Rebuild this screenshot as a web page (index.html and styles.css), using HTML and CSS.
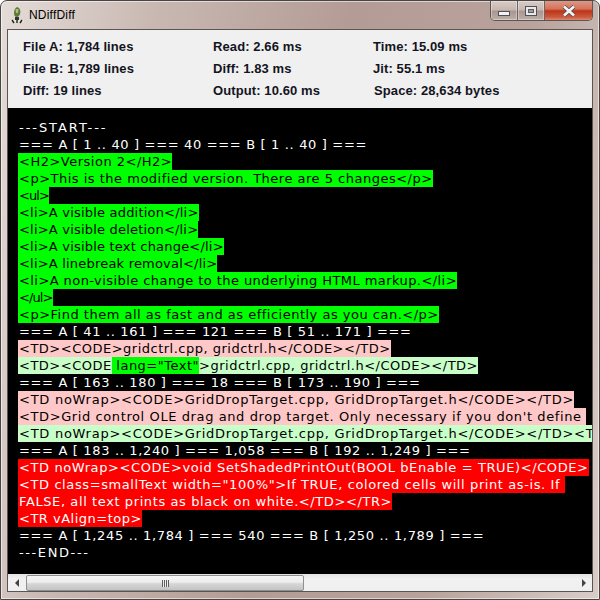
FILE: index.html
```html
<!DOCTYPE html>
<html lang="en">
<head>
<meta charset="utf-8">
<title>NDiffDiff</title>
<link rel="stylesheet" href="styles.css">
</head>
<body>
<div class="window">
  <div class="titlebar">
    <svg class="appicon" width="16" height="18" viewBox="0 0 16 18">
      <path d="M8 1 C11 2 12 5 11 8 C10.500 10 9 11 8 11 C6 11 5 9.500 5 7 C5 4 6 2 8 1Z" fill="#5c7a3a"/>
      <path d="M6.500 3 L9.500 3 L9 7 L7 7Z" fill="#a9c07a"/>
      <rect x="6" y="11" width="4" height="3" fill="#333"/>
      <path d="M1 14 H15 V16 H1Z" fill="#dfe8d0"/>
      <path d="M3 14 L5 17 M8 14 V17 M13 14 L11 17" stroke="#222" stroke-width="1.400"/>
    </svg>
    <span class="title">NDiffDiff</span>
    <div class="controls">
      <div class="ctl ctl-min"><span class="glyph-min"></span></div>
      <div class="ctl ctl-max"><span class="glyph-max"></span></div>
      <div class="ctl ctl-close">
        <svg width="16" height="12" viewBox="0 0 16 12"><path d="M3 1.500 L13 10.500 M13 1.500 L3 10.500" stroke="#4a4f57" stroke-width="4.200"/><path d="M3 1.500 L13 10.500 M13 1.500 L3 10.500" stroke="#f4f4f4" stroke-width="2.600"/></svg>
      </div>
    </div>
  </div>
  <div class="client">
    <div class="stats">
      <span>File A: 1,784 lines</span><span>Read: 2.66 ms</span><span class="c3">Time: 15.09 ms</span>
      <span>File B: 1,789 lines</span><span>Diff: 1.83 ms</span><span class="c3">Jit: 55.1 ms</span>
      <span>Diff: 19 lines</span><span>Output: 10.60 ms</span><span class="c3 c3b">Space: 28,634 bytes</span>
    </div>
    <div class="code">
      <div class="line start">---START---</div>
      <div class="line sep">=== A [ 1 .. 40 ] === 40 === B [ 1 .. 40 ] ===</div>
      <div class="line"><span class="add">&lt;H2&gt;Version 2&lt;/H2&gt;</span></div>
      <div class="line"><span class="add">&lt;p&gt;This is the modified version. There are 5 changes&lt;/p&gt;</span></div>
      <div class="line tiny"><span class="add">&lt;ul&gt;</span></div>
      <div class="line short"><span class="add">&lt;li&gt;A visible addition&lt;/li&gt;</span></div>
      <div class="line short"><span class="add">&lt;li&gt;A visible deletion&lt;/li&gt;</span></div>
      <div class="line short"><span class="add">&lt;li&gt;A visible text change&lt;/li&gt;</span></div>
      <div class="line short"><span class="add">&lt;li&gt;A linebreak removal&lt;/li&gt;</span></div>
      <div class="line medium"><span class="add">&lt;li&gt;A non-visible change to the underlying HTML markup.&lt;/li&gt;</span></div>
      <div class="line tiny"><span class="add">&lt;/ul&gt;</span></div>
      <div class="line"><span class="add">&lt;p&gt;Find them all as fast and as efficiently as you can.&lt;/p&gt;</span></div>
      <div class="line sep">=== A [ 41 .. 161 ] === 121 === B [ 51 .. 171 ] ===</div>
      <div class="line"><span class="old">&lt;TD&gt;&lt;CODE&gt;gridctrl.cpp, gridctrl.h&lt;/CODE&gt;&lt;/TD&gt;</span></div>
      <div class="line"><span class="new">&lt;TD&gt;&lt;CODE</span><span class="add"> lang="Text"</span><span class="new">&gt;gridctrl.cpp, gridctrl.h&lt;/CODE&gt;&lt;/TD&gt;</span></div>
      <div class="line sep">=== A [ 163 .. 180 ] === 18 === B [ 173 .. 190 ] ===</div>
      <div class="line wide"><span class="old">&lt;TD noWrap&gt;&lt;CODE&gt;GridDropTarget.cpp, GridDropTarget.h&lt;/CODE&gt;&lt;/TD&gt;</span></div>
      <div class="line loose"><span class="old">&lt;TD&gt;Grid control OLE drag and drop target. Only necessary if you don't define </span></div>
      <div class="line wide"><span class="new">&lt;TD noWrap&gt;&lt;CODE&gt;GridDropTarget.cpp, GridDropTarget.h&lt;/CODE&gt;&lt;/TD&gt;&lt;T</span></div>
      <div class="line sep">=== A [ 183 .. 1,240 ] === 1,058 === B [ 192 .. 1,249 ] ===</div>
      <div class="line loose"><span class="del">&lt;TD noWrap&gt;&lt;CODE&gt;void SetShadedPrintOut(BOOL bEnable = TRUE)&lt;/CODE&gt;</span></div>
      <div class="line loose"><span class="del">&lt;TD class=smallText width="100%"&gt;If TRUE, colored cells will print as-is. If </span></div>
      <div class="line loose"><span class="del">FALSE, all text prints as black on white.&lt;/TD&gt;&lt;/TR&gt;</span></div>
      <div class="line"><span class="del">&lt;TR vAlign=top&gt;</span></div>
      <div class="line sep">=== A [ 1,245 .. 1,784 ] === 540 === B [ 1,250 .. 1,789 ] ===</div>
      <div class="line mark">---END---</div>
    </div>
    <div class="hscroll">
      <div class="arrow"><span class="tri-left"></span></div>
      <div class="thumb"><span class="grip"></span></div>
      <div class="track"></div>
      <div class="arrow"><span class="tri-right"></span></div>
    </div>
  </div>
</div>
</body>
</html>
```
FILE: styles.css
```css
* { box-sizing: border-box; }
html, body { margin: 0; padding: 0; }
body { width: 600px; height: 600px; overflow: hidden; background: #fff; }
.window {
  width: 600px; height: 600px; padding: 0 6px 7px 6px;
  border: 1px solid #4a4442; border-radius: 7px 7px 0 0;
  background: linear-gradient(100deg, #e4dcd8 0%, #c9b8b2 22%, #b39c95 50%, #b8a29b 75%, #d9cdc8 100%);
  display: flex; flex-direction: column;
  box-shadow: inset 0 0 0 1px rgba(255,255,255,.55);
}
.titlebar { height: 28px; flex: none; display: flex; align-items: center; position: relative; }
.appicon { margin: -1px 0 0 2px; flex: none; }
.title { margin: 0 0 0 4px; font: 12px/16px "Liberation Sans", Arial, sans-serif; color: #000; letter-spacing: .2px; }
.controls { margin-left: auto; align-self: flex-start; display: flex; height: 20px; border: 1px solid #5b5555; border-top: 0; border-radius: 0 0 5px 5px; overflow: hidden; }
.ctl { display: flex; align-items: center; justify-content: center; height: 100%; }
.ctl-min, .ctl-max { background: linear-gradient(#d8cbc6 0%, #c6b6b0 48%, #a8968f 52%, #bdaea8 100%); border-right: 1px solid #6a6361; box-shadow: inset 0 0 0 1px rgba(255,255,255,.35); }
.ctl-min { width: 27px; }
.ctl-max { width: 27px; }
.ctl-close { width: 47px; background: linear-gradient(#d99a87 0%, #d8705a 42%, #bb3518 52%, #cc5a3c 85%, #d98a73 100%); }
.glyph-min { display: block; width: 12px; height: 5px; margin-top: 5px; background: #f2f2f2; border: 1px solid #4f5058; }
.glyph-max { display: block; width: 12px; height: 10px; border: 1px solid #4f5058; background: #e8e8e8; position: relative; }
.glyph-max::after { content: ""; position: absolute; left: 2px; top: 2px; right: 2px; bottom: 2px; background: #a69690; border: 1px solid #5b5c62; }
.client { flex: 1; min-height: 0; display: flex; flex-direction: column; border: 1px solid #5b5452; background: #f0f0f0; overflow: hidden; }
.stats {
  flex: none; height: 78px; padding: 6px 0 0 15px; background: #f0f0f0;
  display: grid; grid-template-columns: 190px 160px 1fr; grid-auto-rows: 22px; align-items: center;
  font: bold 13px/16px "Liberation Sans", Arial, sans-serif; letter-spacing: .1px; color: #14141e;
}
.c3b { margin-left: 1px; }
.code {
  flex: 1; min-height: 0; background: #000; color: #fff; padding: 11px 0 0 10px; overflow: hidden;
  font: 13px/17px "DejaVu Sans", Verdana, sans-serif; letter-spacing: .5px;
}
.line { height: 17px; white-space: pre; }
.sep { letter-spacing: .66px; padding-left: 1px; }
.start { letter-spacing: 1.95px; padding-left: 1px; }
.mark { letter-spacing: 1.6px; padding-left: 1px; }
.tiny { letter-spacing: -.9px; }
.short { letter-spacing: .2px; }
.medium { letter-spacing: .43px; }
.loose { letter-spacing: .6px; }
.wide { letter-spacing: .74px; }
.line span { display: inline-block; height: 17px; }
.line > span:first-child { padding-left: 1px; }
.add { background: #00ff00; color: #000; }
.old { background: #ffc8c8; color: #000; }
.new { background: #c8ffc8; color: #000; }
.del { background: #ff0000; color: #fff; }
.hscroll { flex: none; height: 17px; display: flex; background: linear-gradient(#e2e2e2, #f1f1f1 30%, #f0f0f0); }
.arrow { width: 17px; flex: none; display: flex; align-items: center; justify-content: center; }
.tri-left { width: 0; height: 0; border: 4px solid transparent; border-left: 0; border-right-color: #444; }
.tri-right { width: 0; height: 0; border: 4px solid transparent; border-right: 0; border-left-color: #444; }
.thumb { width: 278px; margin: 1px 0 0 1px; flex: none; display: flex; align-items: center; justify-content: center; border: 1px solid #8f8f8f; border-radius: 2px; background: linear-gradient(#f7f7f7, #ececec 45%, #d6d6d6 55%, #c4c4c4); }
.grip { width: 7px; height: 7px; background: repeating-linear-gradient(90deg, #5f5f5f 0 1px, #eee 1px 2px); }
.track { flex: 1; }
```
